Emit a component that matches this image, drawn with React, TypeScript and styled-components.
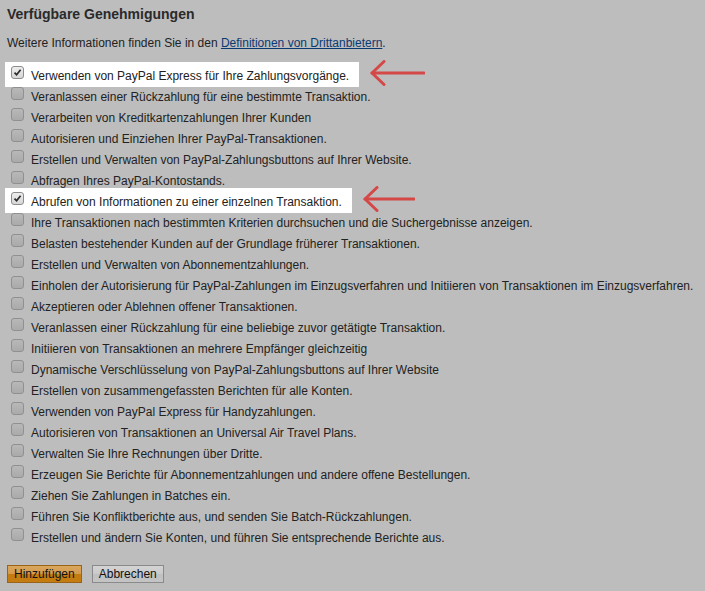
import React from 'react';
import styled, {createGlobalStyle} from 'styled-components';

const GlobalStyle = createGlobalStyle`
	body {
		margin: 0;
		background: #bdbdbd;
		font-family: "Liberation Sans", Arial, sans-serif;
		font-size: 12px;
		color: #222;
	}
`;

const Page = styled.div`
	padding: 6px 7px 8px;
`;

const Heading = styled.h2`
	margin: 0;
	font-size: 14px;
	line-height: 17px;
	font-weight: bold;
	color: #2a2a2a;
`;

const Intro = styled.p`
	margin: 13px 0 0;
	line-height: 14px;
`;

const Link = styled.a`
	color: #0a3a72;
	text-decoration: underline;
`;

const List = styled.div`
	margin-top: 15px;
	display: flex;
	flex-direction: column;
`;

const Row = styled.div`
	display: flex;
	align-items: center;
	height: 21px;
`;

const Item = styled.label<{$highlight?: boolean}>`
	display: inline-flex;
	align-items: flex-start;
	gap: 7px;
	line-height: 14px;
	${p =>
		p.$highlight
			? `
		background: #fff;
		margin-left: -2px;
		padding: 7px 10px 4px 6px;
		margin-top: -2px;
		position: relative;
		z-index: 1;
	`
			: `
		padding-left: 4px;
	`}
`;

const Box = styled.span<{$checked?: boolean}>`
	flex: none;
	width: 11px;
	height: 11px;
	margin-top: -3px;
	border: 1px solid ${p => (p.$checked ? '#8c8c8c' : '#909090')};
	border-radius: 3px;
	background: ${p => (p.$checked ? 'linear-gradient(#eeeeee, #d6d6d6)' : 'linear-gradient(#b8b8b8, #aaaaaa)')};
	display: flex;
	align-items: center;
	justify-content: center;
`;

const Arrow = styled.svg`
	flex: none;
	margin-left: 10px;
	margin-top: -5px;
`;

const Actions = styled.div`
	margin-top: 17px;
	display: flex;
	gap: 10px;
`;

const Button = styled.button<{$primary?: boolean}>`
	font-family: "Liberation Sans", Arial, sans-serif;
	font-size: 12px;
	height: 18px;
	padding: 0 6px;
	color: #111;
	border: 1px solid ${p => (p.$primary ? '#9a6418' : '#8a8a8a')};
	background: ${p =>
		p.$primary
			? 'linear-gradient(#d9a75e 0%, #d49a4c 50%, #c47b0f 51%, #c47d12 100%)'
			: 'linear-gradient(#d4d4d4 0%, #cacaca 50%, #c0c0c0 51%, #c4c4c4 100%)'};
	cursor: pointer;
`;

const CheckMark = () => (
	<svg width='9' height='9' viewBox='0 0 9 9'>
		<path d='M1.5 4.6 L3.6 6.8 L7.6 1.8' stroke='#2a2a2a' strokeWidth='1.7' fill='none' />
	</svg>
);

const RedArrow = ({width}: {width: number}) => (
	<Arrow width={width} height='26' viewBox={`0 0 ${width} 26`}>
		<g stroke='#d54848' strokeWidth='3' fill='none' strokeLinecap='round' strokeLinejoin='round'>
			<path d={`M3 13 H${width - 1}`} />
			<path d='M15 1.5 L3 13 L15 24.5' />
		</g>
	</Arrow>
);

type Permission = {text: string; checked?: boolean; arrow?: number};

const permissions: Permission[] = [
	{text: 'Verwenden von PayPal Express für Ihre Zahlungsvorgänge.', checked: true, arrow: 56},
	{text: 'Veranlassen einer Rückzahlung für eine bestimmte Transaktion.'},
	{text: 'Verarbeiten von Kreditkartenzahlungen Ihrer Kunden'},
	{text: 'Autorisieren und Einziehen Ihrer PayPal-Transaktionen.'},
	{text: 'Erstellen und Verwalten von PayPal-Zahlungsbuttons auf Ihrer Website.'},
	{text: 'Abfragen Ihres PayPal-Kontostands.'},
	{text: 'Abrufen von Informationen zu einer einzelnen Transaktion.', checked: true, arrow: 53},
	{text: 'Ihre Transaktionen nach bestimmten Kriterien durchsuchen und die Suchergebnisse anzeigen.'},
	{text: 'Belasten bestehender Kunden auf der Grundlage früherer Transaktionen.'},
	{text: 'Erstellen und Verwalten von Abonnementzahlungen.'},
	{text: 'Einholen der Autorisierung für PayPal-Zahlungen im Einzugsverfahren und Initiieren von Transaktionen im Einzugsverfahren.'},
	{text: 'Akzeptieren oder Ablehnen offener Transaktionen.'},
	{text: 'Veranlassen einer Rückzahlung für eine beliebige zuvor getätigte Transaktion.'},
	{text: 'Initiieren von Transaktionen an mehrere Empfänger gleichzeitig'},
	{text: 'Dynamische Verschlüsselung von PayPal-Zahlungsbuttons auf Ihrer Website'},
	{text: 'Erstellen von zusammengefassten Berichten für alle Konten.'},
	{text: 'Verwenden von PayPal Express für Handyzahlungen.'},
	{text: 'Autorisieren von Transaktionen an Universal Air Travel Plans.'},
	{text: 'Verwalten Sie Ihre Rechnungen über Dritte.'},
	{text: 'Erzeugen Sie Berichte für Abonnementzahlungen und andere offene Bestellungen.'},
	{text: 'Ziehen Sie Zahlungen in Batches ein.'},
	{text: 'Führen Sie Konfliktberichte aus, und senden Sie Batch-Rückzahlungen.'},
	{text: 'Erstellen und ändern Sie Konten, und führen Sie entsprechende Berichte aus.'}
];

export default function App() {
	return (
		<>
			<GlobalStyle />
			<Page>
				<Heading>Verfügbare Genehmigungen</Heading>
				<Intro>
					Weitere Informationen finden Sie in den <Link href='#'>Definitionen von Drittanbietern</Link>.
				</Intro>
				<List>
					{permissions.map(p => (
						<Row key={p.text}>
							<Item $highlight={p.checked}>
								<Box $checked={p.checked}>{p.checked && <CheckMark />}</Box>
								<span>{p.text}</span>
							</Item>
							{p.arrow && <RedArrow width={p.arrow} />}
						</Row>
					))}
				</List>
				<Actions>
					<Button $primary>Hinzufügen</Button>
					<Button>Abbrechen</Button>
				</Actions>
			</Page>
		</>
	);
}
